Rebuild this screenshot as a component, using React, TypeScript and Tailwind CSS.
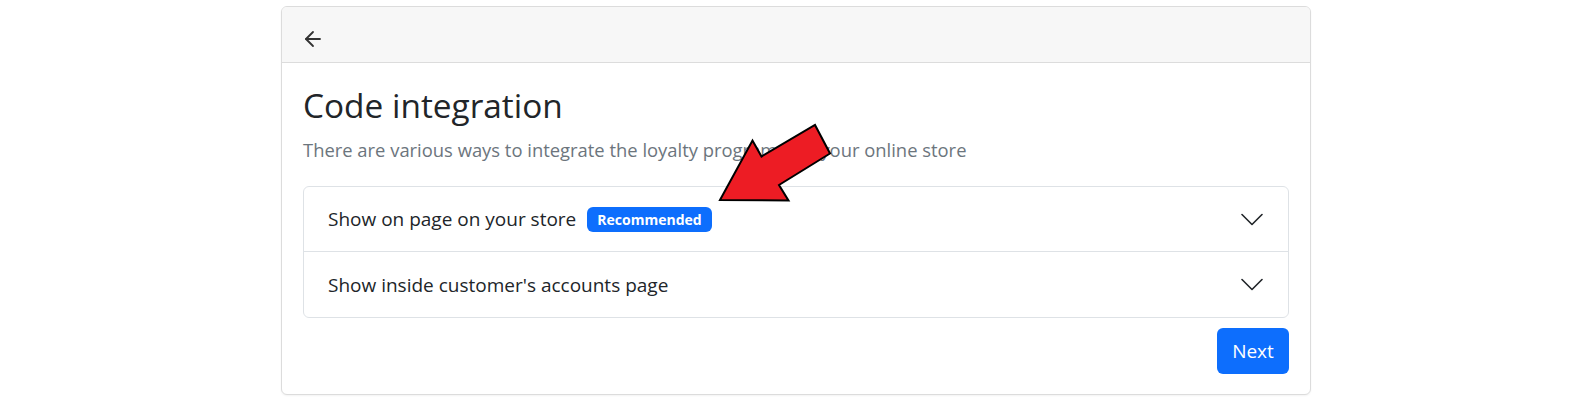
import { ArrowLeft } from "lucide-react";

const font = { fontFamily: '"Open Sans", "Noto Sans", sans-serif' };

function Chevron() {
  return (
    <svg width="22" height="13" viewBox="0 0 22 13" fill="none">
      <polyline
        points="1,1.5 11,11.5 21,1.5"
        stroke="#212529"
        strokeWidth="1.6"
        strokeLinecap="round"
        strokeLinejoin="round"
      />
    </svg>
  );
}

function AccordionRow({
  label,
  badge,
  last,
}: {
  label: string;
  badge?: string;
  last?: boolean;
}) {
  return (
    <div
      className={
        "flex h-[65px] items-center justify-between pl-[24px] pr-[25px] " +
        (last ? "" : "border-b border-[#dee2e6]")
      }
    >
      <div className="flex items-center">
        <span className="text-[19px] leading-[28px] text-[#212529]">{label}</span>
        {badge && (
          <span className="ml-[11px] flex h-[25px] items-center rounded-[6px] bg-[#0d6efd] px-[10px] text-[14px] font-bold text-white">
            {badge}
          </span>
        )}
      </div>
      <Chevron />
    </div>
  );
}

export default function App() {
  return (
    <div className="relative h-[400px] w-full bg-white pl-[281px] pt-[6px]" style={font}>
      <div className="w-[1030px] overflow-hidden rounded-[6px] border border-[#dcdcdc] bg-white shadow-[0_1px_2px_rgba(0,0,0,0.05)]">
        {/* header */}
        <div className="flex h-[56px] items-start border-b border-[#dcdcdc] bg-[#f7f7f7] pl-[19px] pt-[20px]">
          <ArrowLeft size={24} strokeWidth={1.8} color="#333333" />
        </div>

        {/* body */}
        <div className="px-[21px] pb-[20px] pt-[22px]">
          <h1 className="text-[33.4px] leading-[40px] text-[#212529]">Code integration</h1>
          <p className="mt-[11px] text-[18.4px] leading-[27px] text-[#6c757d]">
            There are various ways to integrate the loyalty program into your online store
          </p>

          <div className="mt-[23px] rounded-[6px] border border-[#dee2e6]">
            <AccordionRow label="Show on page on your store" badge="Recommended" />
            <AccordionRow label="Show inside customer's accounts page" last />
          </div>

          <div className="mt-[10px] flex justify-end">
            <button className="flex h-[46px] w-[72px] items-center justify-center rounded-[6px] bg-[#0d6efd] text-[19px] text-white">
              Next
            </button>
          </div>
        </div>
      </div>

      {/* red callout arrow */}
      <svg
        className="pointer-events-none absolute left-0 top-0"
        width="1585"
        height="400"
        viewBox="0 0 1585 400"
      >
        <polygon
          points="720,200 752.5,140.5 761.5,156.5 815,125 830,153.5 779,185 788.5,200.5"
          fill="#ed1c24"
          stroke="#000000"
          strokeWidth="2"
          strokeLinejoin="miter"
        />
      </svg>
    </div>
  );
}
